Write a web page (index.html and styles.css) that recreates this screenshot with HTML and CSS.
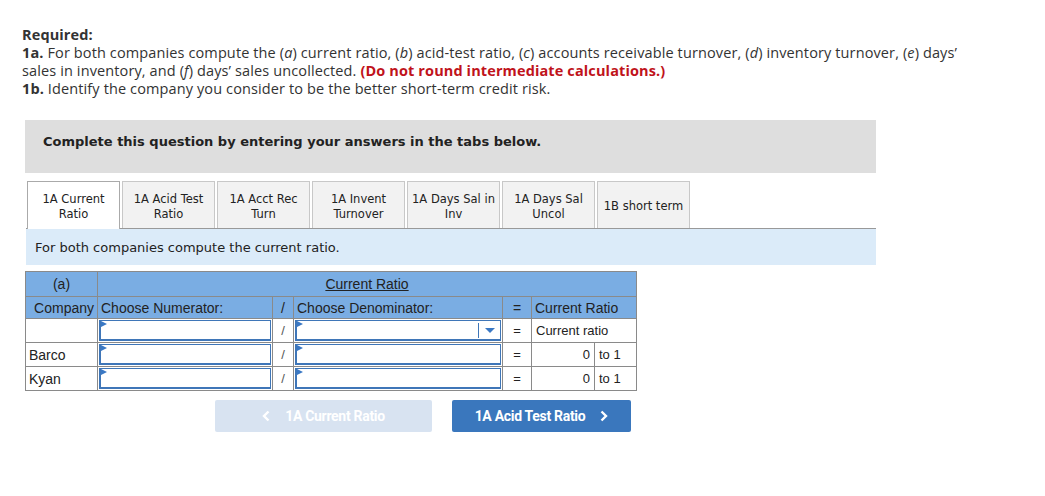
FILE: index.html
```html
<!DOCTYPE html>
<html>
<head>
<meta charset="utf-8">
<link rel="stylesheet" href="styles.css">
</head>
<body>
<div class="page">
  <div class="req">
    <div class="req-title">Required:</div>
    <div><b>1a.</b> For both companies compute the (<i>a</i>) current ratio, (<i>b</i>) acid-test ratio, (<i>c</i>) accounts receivable turnover, (<i>d</i>) inventory turnover, (<i>e</i>) days’ sales in inventory, and (<i>f</i>) days’ sales uncollected. <span class="red">(Do not round intermediate calculations.)</span></div>
    <div><b>1b.</b> Identify the company you consider to be the better short-term credit risk.</div>
  </div>

  <div class="instr">Complete this question by entering your answers in the tabs below.</div>

  <div class="tabs">
    <div class="tab active">1A Current<br>Ratio</div>
    <div class="tab">1A Acid Test<br>Ratio</div>
    <div class="tab">1A Acct Rec<br>Turn</div>
    <div class="tab">1A Invent<br>Turnover</div>
    <div class="tab">1A Days Sal in<br>Inv</div>
    <div class="tab">1A Days Sal<br>Uncol</div>
    <div class="tab">1B short term</div>
  </div>
  <div class="panel">For both companies compute the current ratio.</div>

  <table class="grid">
    <colgroup>
      <col class="c-co"><col class="c-num"><col class="c-sl"><col class="c-den"><col class="c-eq"><col class="c-res"><col class="c-to">
    </colgroup>
    <tr class="h1">
      <th class="center">(a)</th>
      <th colspan="6" class="center"><u>Current Ratio</u></th>
    </tr>
    <tr class="h2">
      <th class="right">Company</th>
      <th class="left">Choose Numerator:</th>
      <th class="center">/</th>
      <th class="left">Choose Denominator:</th>
      <th class="center">=</th>
      <th colspan="2" class="left">Current Ratio</th>
    </tr>
    <tr class="row">
      <td></td>
      <td class="inp"><div class="box"><span class="flag"></span></div></td>
      <td class="center sl">/</td>
      <td class="inp"><div class="box select"><span class="flag"></span><span class="sep"></span><span class="caret"></span></div></td>
      <td class="center">=</td>
      <td colspan="2" class="left">Current ratio</td>
    </tr>
    <tr class="row">
      <td class="left lbl">Barco</td>
      <td class="inp"><div class="box"><span class="flag"></span></div></td>
      <td class="center sl">/</td>
      <td class="inp"><div class="box"><span class="flag"></span></div></td>
      <td class="center">=</td>
      <td class="right">0</td>
      <td class="left">to 1</td>
    </tr>
    <tr class="row">
      <td class="left lbl">Kyan</td>
      <td class="inp"><div class="box"><span class="flag"></span></div></td>
      <td class="center sl">/</td>
      <td class="inp"><div class="box"><span class="flag"></span></div></td>
      <td class="center">=</td>
      <td class="right">0</td>
      <td class="left">to 1</td>
    </tr>
  </table>

  <div class="nav">
    <div class="btn prev"><svg class="chev-l" width="8" height="12" viewBox="0 0 8 12"><path d="M6.5 1.5 L2 6 L6.5 10.5" fill="none" stroke="#fff" stroke-width="2.4"/></svg>1A Current Ratio</div>
    <div class="btn next">1A Acid Test Ratio<svg class="chev-r" width="8" height="12" viewBox="0 0 8 12"><path d="M1.5 1.5 L6 6 L1.5 10.5" fill="none" stroke="#fff" stroke-width="2.4"/></svg></div>
  </div>
</div>
</body>
</html>
```

FILE: styles.css
```css
html, body {
  margin: 0;
  padding: 0;
  background: #fff;
}
.page {
  padding: 26px 0 0 22px;
  width: 1000px;
}
.req {
  font-family: "Open Sans", "Liberation Sans", sans-serif;
  font-size: 14.5px;
  letter-spacing: 0.12px;
  line-height: 18px;
  color: #333;
  width: 950px;
}
.req-title {
  font-weight: 700;
}
.req b {
  font-weight: 700;
}
.red {
  color: #c0131b;
  font-weight: 700;
}
.instr {
  margin-top: 22px;
  margin-left: 3px;
  height: 53px;
  box-sizing: border-box;
  padding: 14px 0 0 18px;
  width: 851px;
  background: #dedede;
  font-family: "DejaVu Sans", Verdana, sans-serif;
  font-weight: 700;
  font-size: 13px;
  line-height: 16px;
  color: #222;
}
.tabs {
  display: flex;
  gap: 2px;
  margin-top: 8px;
  margin-left: 5px;
  height: 47px;
}
.tab {
  width: 93px;
  height: 47px;
  box-sizing: border-box;
  border: 1px solid #c8c8c8;
  border-bottom: none;
  background: #f2f2f2;
  font-family: "DejaVu Sans", Verdana, sans-serif;
  font-size: 11.5px;
  line-height: 15px;
  color: #222;
  display: flex;
  align-items: center;
  justify-content: center;
  text-align: center;
  padding-top: 3px;
}
.tab.active {
  background: #fff;
  border-color: #aaa;
  height: 48px;
  position: relative;
  z-index: 1;
}
.panel {
  margin-left: 4px;
  border-top: 1px solid #999;
  background: #dbebf9;
  font-family: "DejaVu Sans", Verdana, sans-serif;
  font-size: 13px;
  color: #222;
  padding-left: 9px;
  display: flex;
  align-items: center;
  padding-top: 1px;
  box-sizing: border-box;
  width: 850px;
  height: 37px;
}
.grid {
  margin-top: 6px;
  margin-left: 3px;
  border-collapse: collapse;
  table-layout: fixed;
  width: 611px;
  font-family: "Liberation Sans", Arial, sans-serif;
  font-size: 13px;
  color: #222;
}
.c-co { width: 72px; }
.c-num { width: 175px; }
.c-sl { width: 21px; }
.c-den { width: 209px; }
.c-eq { width: 29px; }
.c-res { width: 63px; }
.c-to { width: 42px; }
.grid th, .grid td {
  border: 1px solid #8a8a8a;
  padding: 0 4px;
  white-space: nowrap;
  overflow: hidden;
}
.grid th {
  background: #7aade3;
  font-weight: 400;
  font-size: 14px;
  color: #222;
}
.grid td.lbl {
  font-size: 14px;
  padding-left: 3px;
}
.h1 th { height: 24px; }
.h2 th { height: 21px; }
.row td { height: 23px; }
.center { text-align: center; }
.left { text-align: left; }
.right { text-align: right; }
.h2 th.right { padding-right: 3px; padding-left: 0; }
.h2 th.left { padding-left: 3px; }
.sl { color: #555; }
.grid td.inp {
  padding: 0;
}
.box {
  position: relative;
  height: 21px;
  margin: 0 1px;
  border: 1px solid #3f76b8;
  border-width: 1px 1px 2px 2px;
  background: #fff;
  box-sizing: border-box;
}
.flag {
  position: absolute;
  left: 0;
  top: 0;
  width: 0;
  height: 0;
  border-top: 3px solid transparent;
  border-bottom: 3px solid transparent;
  border-left: 6px solid #3a78c4;
}
.sep {
  position: absolute;
  right: 21px;
  top: 2px;
  bottom: 1px;
  width: 1px;
  background: #3f76b8;
}
.caret {
  position: absolute;
  right: 5px;
  top: 7px;
  width: 0;
  height: 0;
  border-left: 5px solid transparent;
  border-right: 5px solid transparent;
  border-top: 5px solid #3a78c4;
}
.nav {
  display: flex;
  gap: 20px;
  margin-top: 9px;
  margin-left: 193px;
}
.btn {
  height: 32px;
  border-radius: 2px;
  display: flex;
  align-items: center;
  justify-content: center;
  font-family: Roboto, "Liberation Sans", sans-serif;
  font-weight: 700;
  font-size: 14px;
  letter-spacing: -0.3px;
  color: #fff;
}
.prev {
  width: 217px;
  background: #d8e3f1;
}
.chev-l { margin-right: 15px; }
.next {
  width: 179px;
  background: #3a77bd;
}
.chev-r { margin-left: 15px; }
```
